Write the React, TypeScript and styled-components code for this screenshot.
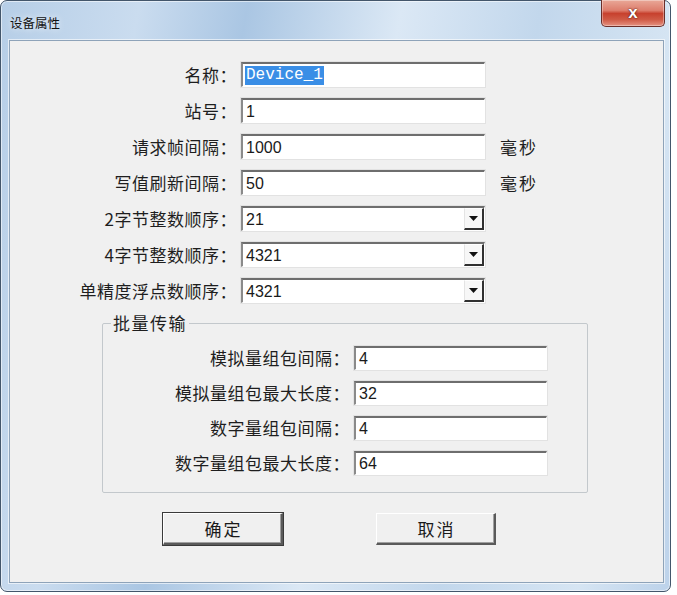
import React from "react";
import styled, { createGlobalStyle } from "styled-components";

const Global = createGlobalStyle`
  html, body { margin: 0; padding: 0; background: #ffffff; }
  body { font-family: "Noto Sans CJK SC", "Noto Sans", sans-serif; }
  * { box-sizing: border-box; }
`;

const Window = styled.div`
  width: 671px;
  height: 592px;
  display: flex;
  flex-direction: column;
  border: 1px solid #43566b;
  border-radius: 7px;
  padding: 0 6px 8px 8px;
  background: linear-gradient(
    100deg,
    #b6cee7 0%,
    #cadcef 18%,
    #aac6e3 32%,
    #dbe8f5 52%,
    #c2d7ec 70%,
    #d6e5f3 88%,
    #bcd2ea 100%
  );
  box-shadow: inset 0 0 0 1px rgba(255, 255, 255, 0.55);
`;

const TitleBar = styled.div`
  height: 39px;
  display: flex;
  align-items: flex-start;
  justify-content: space-between;
`;

const Title = styled.div`
  margin-top: 13px;
  margin-left: 1px;
  font-size: 12.5px;
  line-height: 18px;
  color: #111;
  text-shadow: 0 0 6px rgba(255, 255, 255, 0.9);
`;

const CloseButton = styled.div`
  width: 64px;
  height: 27px;
  margin-top: -1px;
  margin-right: -1px;
  border: 1px solid #6b2f2a;
  border-top: none;
  border-radius: 0 0 5px 5px;
  background: linear-gradient(
    180deg,
    #e9a898 0%,
    #dd7d6c 40%,
    #c7412e 52%,
    #cf5a45 75%,
    #e59282 100%
  );
  box-shadow: inset 0 0 0 1px rgba(255, 255, 255, 0.35);
  display: flex;
  align-items: center;
  justify-content: center;
  color: #ffffff;
  font-family: "Liberation Sans", Arial, sans-serif;
  font-weight: bold;
  font-size: 17px;
  line-height: 1;
  padding-bottom: 2px;
  text-shadow: 0 0 2px #5a1a12, 0 0 1px #5a1a12;
`;

const Client = styled.div`
  flex: 1;
  background: #f0f0f0;
  border: 1px solid #8ea3b9;
  box-shadow: 0 0 0 1px rgba(255, 255, 255, 0.6);
  display: flex;
  flex-direction: column;
`;

const Form = styled.div`
  display: flex;
  flex-direction: column;
  gap: 11px;
  padding-top: 21px;
`;

const Row = styled.div<{ $label: number; $field: number; $h: number }>`
  display: grid;
  grid-template-columns: ${(p) => p.$label}px ${(p) => p.$field}px auto;
  column-gap: 4px;
  align-items: center;
  height: ${(p) => p.$h}px;
`;

const Label = styled.div`
  text-align: right;
  font-size: 17px;
  letter-spacing: 0.5px;
  line-height: 20px;
  color: #1e1e1e;
  white-space: nowrap;
`;

const Unit = styled.div`
  margin-left: 11px;
  font-size: 17px;
  letter-spacing: 2px;
  line-height: 20px;
  color: #1e1e1e;
`;

const Sunken = styled.div`
  height: 100%;
  background: #ffffff;
  border-style: solid;
  border-width: 2px 1px 1px 2px;
  border-color: #6e6e6e #ffffff #ffffff #8a8a8a;
  box-shadow: 0 0 0 1px #e2e2e2;
  display: flex;
  align-items: center;
  padding-left: 2px;
  overflow: hidden;
`;

const ValueText = styled.span<{ $mono?: boolean; $selected?: boolean }>`
  font-family: ${(p) =>
    p.$mono ? `"Liberation Mono", "Courier New", monospace` : `"Liberation Sans", Arial, sans-serif`};
  font-size: 16px;
  line-height: 19px;
  color: ${(p) => (p.$selected ? "#ffffff" : "#1a1a1a")};
  background: ${(p) => (p.$selected ? "#3a8ee6" : "transparent")};
  padding: 0 1px;
  white-space: nowrap;
`;

const ComboBody = styled(Sunken)`
  justify-content: space-between;
  padding-right: 0;
`;

const DropButton = styled.div`
  width: 20px;
  height: 100%;
  background: #f7f7f7;
  border-style: solid;
  border-width: 1px 2px 2px 1px;
  border-color: #ffffff #303030 #303030 #e4e4e4;
  display: flex;
  align-items: center;
  justify-content: center;
`;

const GroupBox = styled.fieldset`
  margin: 10px 0 0 92px;
  width: 486px;
  padding: 0 0 17px 0;
  border: 1px solid #c3c8cc;
  border-radius: 2px;
  min-width: 0;
`;

const Legend = styled.legend`
  margin-left: 8px;
  padding: 0 2px;
  font-size: 17px;
  letter-spacing: 1.5px;
  line-height: 20px;
  color: #1e1e1e;
`;

const GroupRows = styled.div`
  display: flex;
  flex-direction: column;
  gap: 11px;
  padding-top: 13px;
`;

const ButtonRow = styled.div`
  display: flex;
  gap: 93px;
  margin-top: 20px;
  padding-left: 153px;
`;

const DialogButton = styled.button<{ $default?: boolean }>`
  width: 120px;
  height: 32px;
  padding: 0 0 0 2px;
  background: #f0f0f0;
  font-family: "Noto Sans CJK SC", sans-serif;
  font-size: 17px;
  letter-spacing: 2px;
  color: #1a1a1a;
  border-style: solid;
  border-width: 1px 2px 2px 1px;
  border-color: #ffffff #5a5a5a #5a5a5a #ffffff;
  box-shadow: ${(p) =>
    p.$default ? "0 0 0 1px #3a3a3a, inset -1px -1px 0 #a0a0a0" : "inset -1px -1px 0 #a0a0a0"};
  display: flex;
  align-items: center;
  justify-content: center;
`;

const Arrow = () => (
  <svg width="9" height="5" viewBox="0 0 9 5">
    <path d="M0 0 H9 L4.5 5 Z" fill="#111" />
  </svg>
);

type Field = { label: string; value: string; unit?: string; combo?: boolean };

const mainFields: Field[] = [
  { label: "站号：", value: "1" },
  { label: "请求帧间隔：", value: "1000", unit: "毫秒" },
  { label: "写值刷新间隔：", value: "50", unit: "毫秒" },
  { label: "2字节整数顺序：", value: "21", combo: true },
  { label: "4字节整数顺序：", value: "4321", combo: true },
  { label: "单精度浮点数顺序：", value: "4321", combo: true },
];

const groupFields: Field[] = [
  { label: "模拟量组包间隔：", value: "4" },
  { label: "模拟量组包最大长度：", value: "32" },
  { label: "数字量组包间隔：", value: "4" },
  { label: "数字量组包最大长度：", value: "64" },
];

export default function App() {
  return (
    <>
      <Global />
      <Window>
        <TitleBar>
          <Title>设备属性</Title>
          <CloseButton>x</CloseButton>
        </TitleBar>
        <Client>
          <Form>
            <Row $label={227} $field={244} $h={25}>
              <Label>名称：</Label>
              <Sunken>
                <ValueText $mono $selected>
                  Device_1
                </ValueText>
              </Sunken>
            </Row>
            {mainFields.map((f) => (
              <Row key={f.label} $label={227} $field={244} $h={25}>
                <Label>{f.label}</Label>
                {f.combo ? (
                  <ComboBody>
                    <ValueText>{f.value}</ValueText>
                    <DropButton>
                      <Arrow />
                    </DropButton>
                  </ComboBody>
                ) : (
                  <Sunken>
                    <ValueText>{f.value}</ValueText>
                  </Sunken>
                )}
                {f.unit ? <Unit>{f.unit}</Unit> : <span />}
              </Row>
            ))}
          </Form>
          <GroupBox>
            <Legend>批量传输</Legend>
            <GroupRows>
              {groupFields.map((f) => (
                <Row key={f.label} $label={247} $field={193} $h={24}>
                  <Label>{f.label}</Label>
                  <Sunken>
                    <ValueText>{f.value}</ValueText>
                  </Sunken>
                  <span />
                </Row>
              ))}
            </GroupRows>
          </GroupBox>
          <ButtonRow>
            <DialogButton $default>确定</DialogButton>
            <DialogButton>取消</DialogButton>
          </ButtonRow>
        </Client>
      </Window>
    </>
  );
}
